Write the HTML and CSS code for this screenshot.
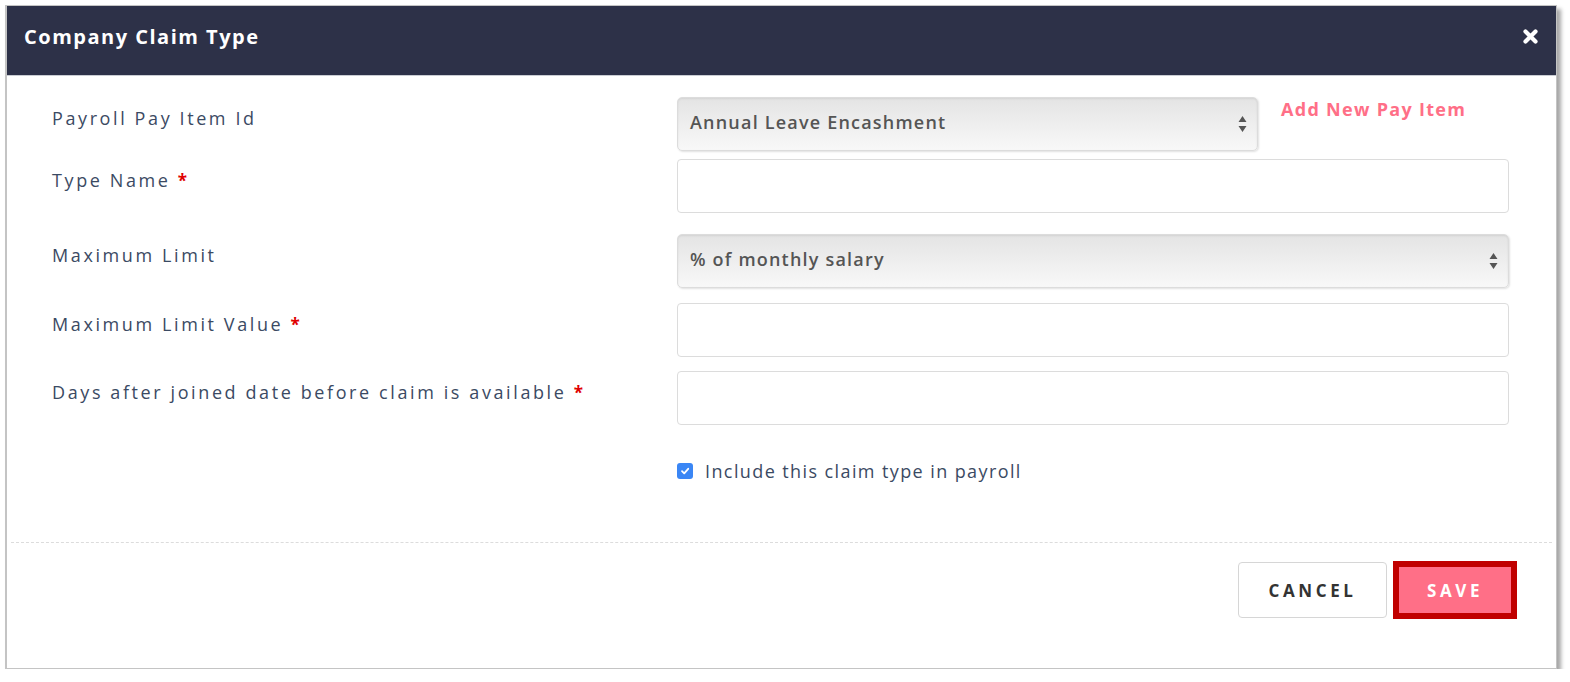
FILE: index.html
```html
<!DOCTYPE html>
<html>
<head>
<meta charset="utf-8">
<link rel="stylesheet" href="styles.css">
</head>
<body>
<div class="modal">
  <div class="modal-header">
    <h1 class="modal-title">Company Claim Type</h1>
    <span class="close">
      <svg width="15" height="15" viewBox="0 0 15 15"><path d="M2.5 2.5 L12.5 12.5 M12.5 2.5 L2.5 12.5" stroke="#fff" stroke-width="4.2" stroke-linecap="round"/></svg>
    </span>
  </div>
  <div class="modal-body">
    <div class="row row-1">
      <label class="label">Payroll Pay Item Id</label>
      <div class="field field-inline">
        <div class="select select-short"><span>Annual Leave Encashment</span><svg class="arrows" width="9" height="18" viewBox="0 0 9 18"><path d="M4.5 1 L8.5 7 L0.5 7 Z M0.5 11 L8.5 11 L4.5 17 Z" fill="#555"/></svg></div>
        <a class="link">Add New Pay Item</a>
      </div>
    </div>
    <div class="row row-2">
      <label class="label">Type Name <span class="req">*</span></label>
      <div class="field"><div class="input"></div></div>
    </div>
    <div class="row row-3">
      <label class="label">Maximum Limit</label>
      <div class="field"><div class="select"><span>% of monthly salary</span><svg class="arrows" width="9" height="18" viewBox="0 0 9 18"><path d="M4.5 1 L8.5 7 L0.5 7 Z M0.5 11 L8.5 11 L4.5 17 Z" fill="#555"/></svg></div></div>
    </div>
    <div class="row row-4">
      <label class="label">Maximum Limit Value <span class="req">*</span></label>
      <div class="field"><div class="input"></div></div>
    </div>
    <div class="row row-5">
      <label class="label">Days after joined date before claim is available <span class="req">*</span></label>
      <div class="field"><div class="input"></div></div>
    </div>
    <div class="row row-check">
      <div></div>
      <div class="check-line">
        <span class="checkbox"><svg width="10" height="10" viewBox="0 0 10 10"><path d="M2 5.2 L4.2 7.4 L8.2 2.8" stroke="#fff" stroke-width="1.8" fill="none" stroke-linecap="round" stroke-linejoin="round"/></svg></span>
        <span class="check-text">Include this claim type in payroll</span>
      </div>
    </div>
  </div>
  <div class="modal-footer">
    <button class="btn btn-cancel">CANCEL</button>
    <button class="btn btn-save">SAVE</button>
  </div>
</div>
</body>
</html>
```
FILE: styles.css
```css
* { box-sizing: border-box; }
html, body { margin: 0; padding: 0; background: #fff; }
body { font-family: "Open Sans", "DejaVu Sans", sans-serif; }

.modal {
  margin: 5px 0 0 5px;
  width: 1552px;
  height: 664px;
  border: 1px solid #c4c4c4;
  border-left-width: 2px;
  background: #fff;
  box-shadow: 4px 4px 4px rgba(0,0,0,0.35);
  display: flex;
  flex-direction: column;
}
.modal-header {
  height: 70px;
  background: #2d3148;
  border-bottom: 1px solid #c9ccd3;
  display: flex;
  align-items: center;
  justify-content: space-between;
  padding: 0 18px 0 17px;
}
.modal-title {
  margin: 0;
  color: #fff;
  font-size: 20px;
  font-weight: 700;
  letter-spacing: 1.5px;
  margin-top: -8px;
}
.close { display: flex; margin-top: -8px; }

.modal-body {
  padding: 21px 47px 0 45px;
  flex: 1;
}
.row {
  display: grid;
  grid-template-columns: 625px 1fr;
}
.row-1 { margin-bottom: 8px; }
.row-2 { margin-bottom: 21px; }
.row-3 { margin-bottom: 15px; }
.row-4 { margin-bottom: 14px; }
.row-5 { margin-bottom: 37px; }

.label {
  font-size: 18px;
  color: #3b4a63;
  letter-spacing: 2.6px;
  padding-top: 10px;
  line-height: 22px;
}
.req { color: #e00000; font-weight: 700; font-size: 17px; }

.field-inline { display: flex; align-items: flex-start; }
.select {
  height: 54px;
  border: 1px solid #dcdcdc;
  border-radius: 5px;
  background: linear-gradient(#e4e4e4, #f8f8f8);
  box-shadow: inset 0 1px 2px rgba(0,0,0,0.08), 1px 1px 2px rgba(0,0,0,0.12);
  display: flex;
  align-items: center;
  justify-content: space-between;
  padding: 0 10px 0 12px;
  font-size: 18px;
  font-weight: 600;
  color: #555;
  letter-spacing: 1.2px;
}
.select span { margin-top: -5px; }
.select-short { width: 581px; }
.arrows { flex: none; }
.link {
  margin-left: 23px;
  color: #ff6f87;
  font-size: 18px;
  font-weight: 700;
  letter-spacing: 1.3px;
  line-height: 24px;
}
.input {
  height: 54px;
  border: 1px solid #dcdcdc;
  border-radius: 4px;
  background: #fff;
}

.check-line { display: flex; align-items: center; height: 18px; }
.checkbox {
  width: 16px; height: 16px;
  border-radius: 3px;
  background: #3a86f5;
  display: flex; align-items: center; justify-content: center;
  margin-right: 12px;
}
.check-text {
  font-size: 18px;
  color: #3b4a63;
  letter-spacing: 1.4px;
}

.modal-footer {
  margin: 0 4px;
  border-top: 1px dashed #dcdcdc;
  padding: 18px 35px 49px 0;
  display: flex;
  justify-content: flex-end;
  align-items: center;
  gap: 6px;
}
.btn {
  font-family: "Open Sans", "DejaVu Sans", sans-serif;
  font-weight: 700;
  font-size: 17px;
  letter-spacing: 3.6px;
  cursor: pointer;
  padding: 0;
}
.btn-cancel {
  width: 149px; height: 56px;
  background: #fff;
  border: 1px solid #d6d6d6;
  border-radius: 4px;
  color: #333;
}
.btn-save {
  width: 124px; height: 58px;
  background: #ff6f87;
  border: 6px solid #c00000;
  color: #fff;
}
```
